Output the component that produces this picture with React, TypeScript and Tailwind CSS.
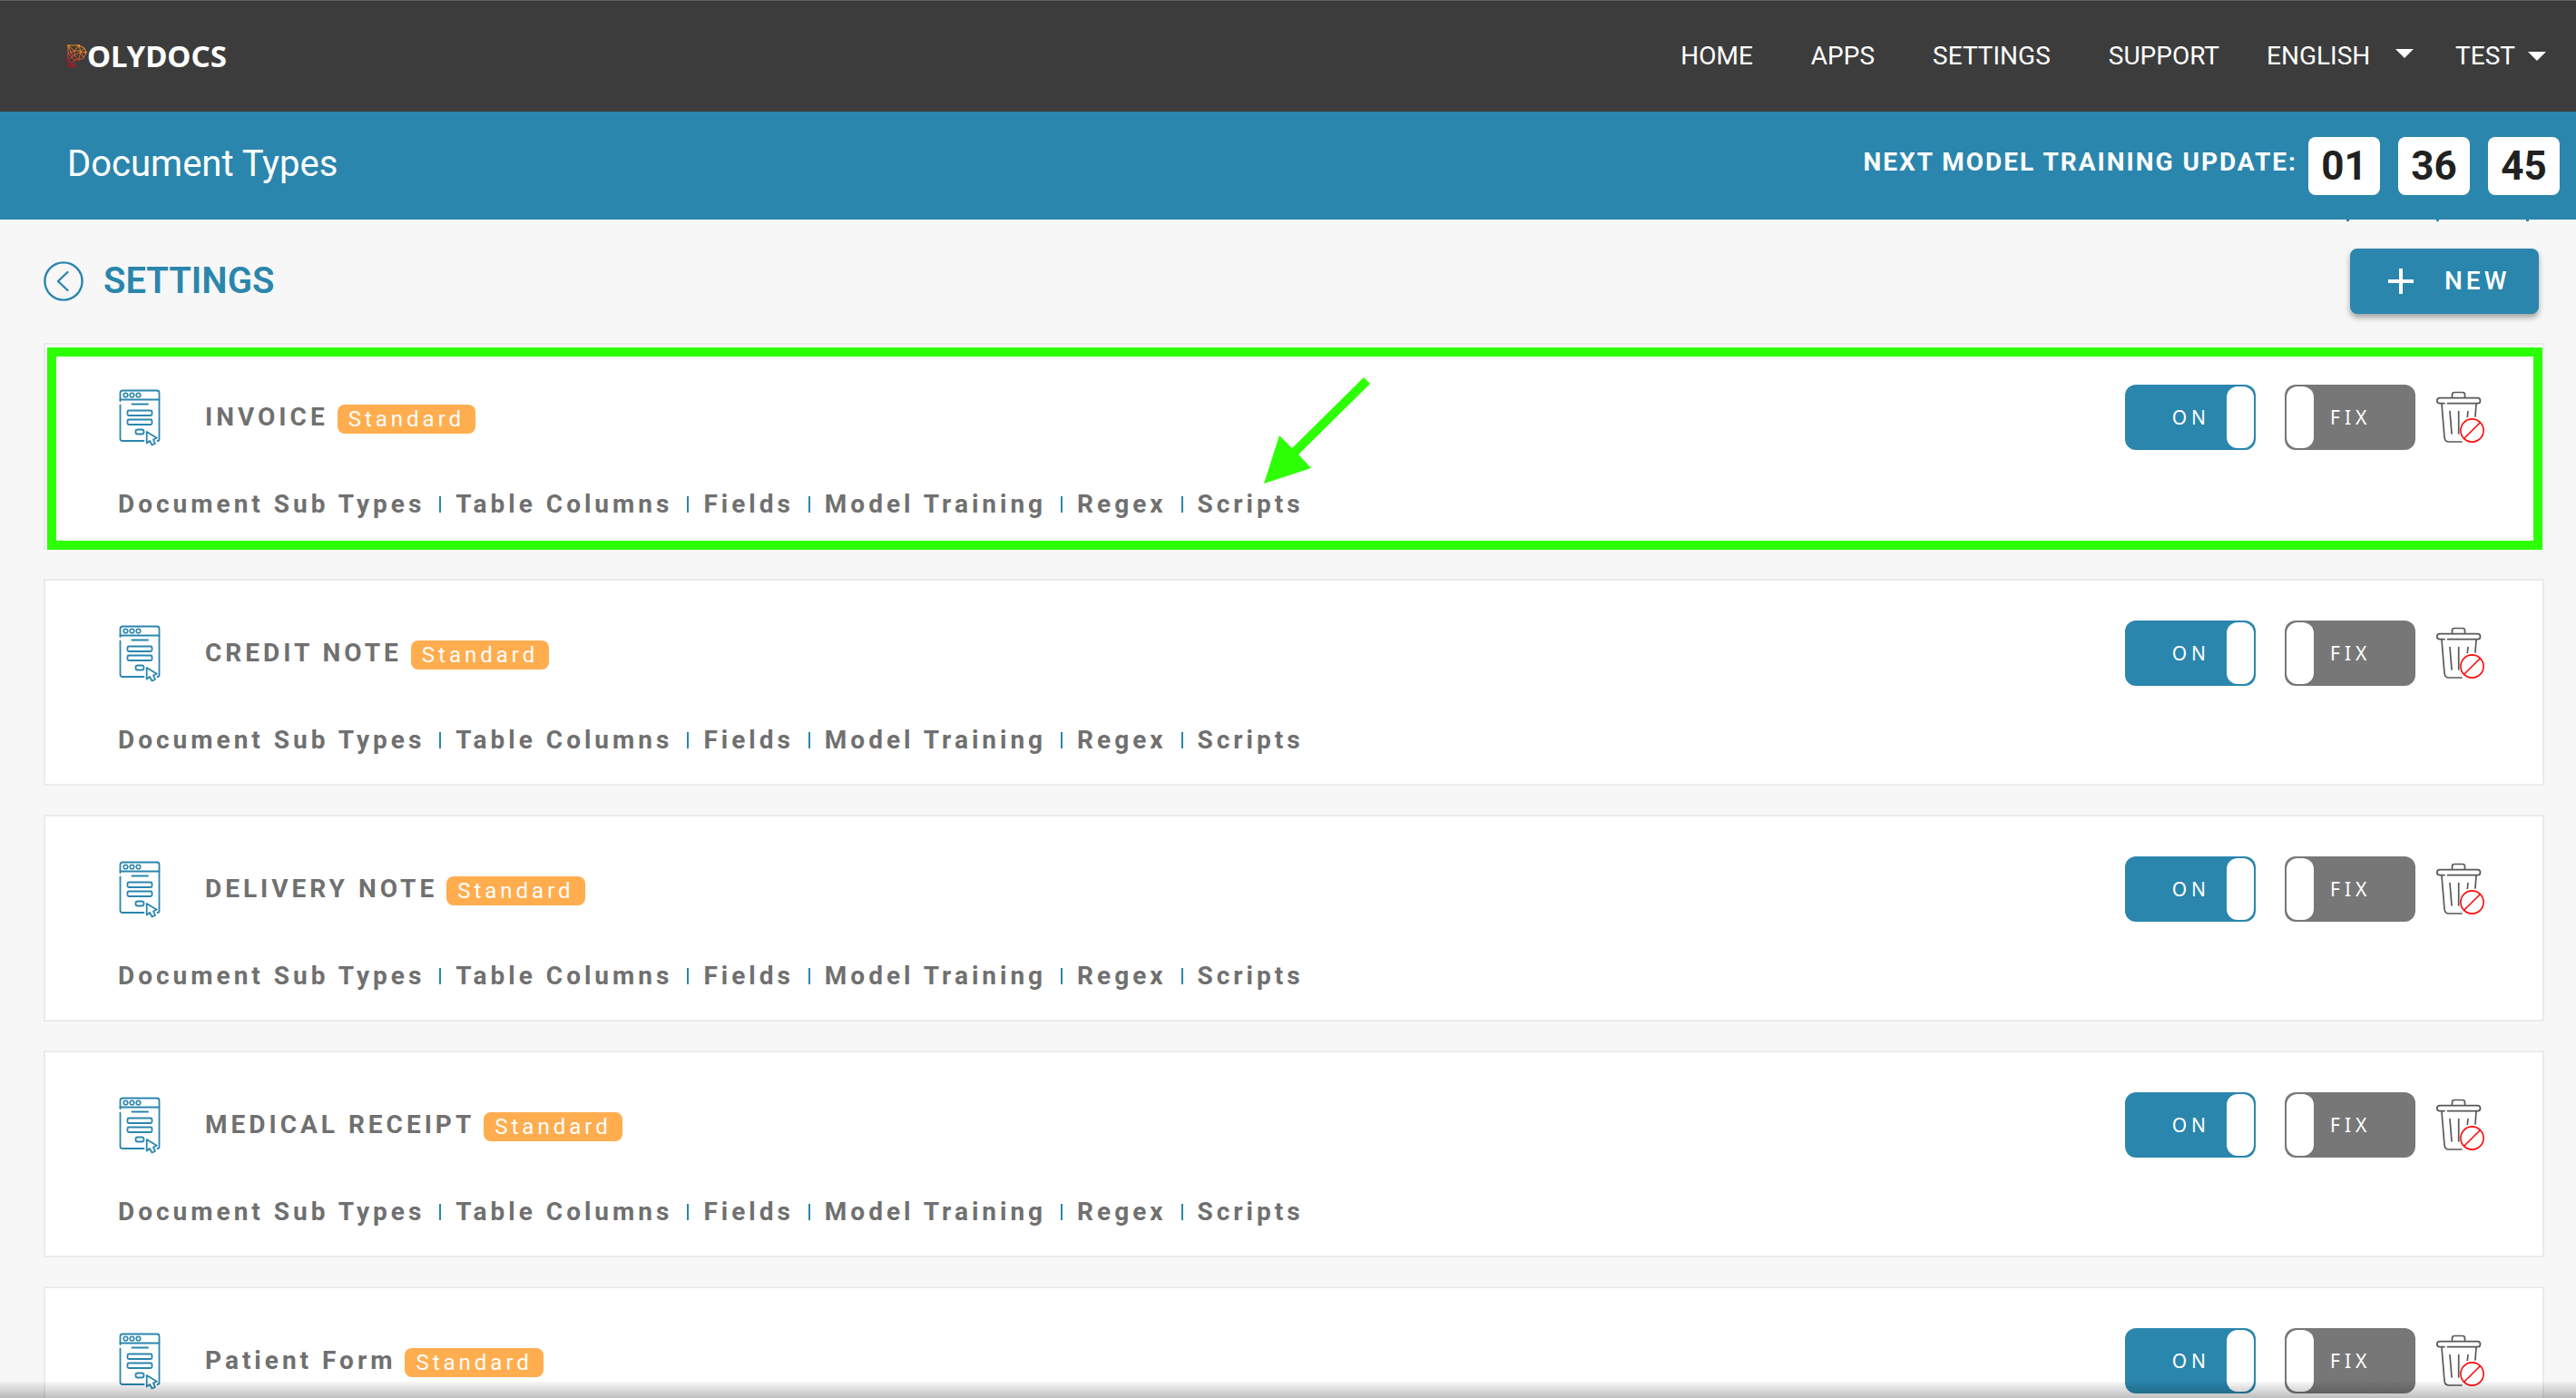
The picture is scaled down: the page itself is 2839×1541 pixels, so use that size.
import React from "react";

type DocType = { name: string; highlighted?: boolean };

const docTypes: DocType[] = [
  { name: "INVOICE", highlighted: true },
  { name: "CREDIT NOTE" },
  { name: "DELIVERY NOTE" },
  { name: "MEDICAL RECEIPT" },
  { name: "Patient Form" },
];

const sections = ["Document Sub Types", "Table Columns", "Fields", "Model Training", "Regex", "Scripts"];
const navLinks = ["HOME", "APPS", "SETTINGS", "SUPPORT"];
const countdown = ["01", "36", "45"];

function Caret({ className }: { className?: string }) {
  return (
    <svg className={className} width="20" height="10" viewBox="0 0 20 10" fill="currentColor" aria-hidden="true">
      <path d="M0 0H20L10 10Z" />
    </svg>
  );
}

function LogoMark() {
  return (
    <svg width="22" height="26" viewBox="0 0 22 26" fill="none" aria-hidden="true">
      <defs>
        <linearGradient id="mark" x1="16" y1="0" x2="4" y2="26" gradientUnits="userSpaceOnUse">
          <stop offset="0" stopColor="#f5a623" />
          <stop offset="0.5" stopColor="#d9532a" />
          <stop offset="1" stopColor="#b8001c" />
        </linearGradient>
      </defs>
      <g stroke="url(#mark)" strokeWidth="1">
        <path d="M1 1H13L19 4L21 9L18 15L13 17H8V24H1Z" />
        <path d="M1 1L8 7L13 1L15 8L21 9M8 7H15L13 17L8 12V7M1 10L8 7M1 10L8 17L1 24M1 17L8 12M1 17L8 24M15 8L19 4M15 8L18 15M1 1L6 13M8 12L15 8" />
      </g>
      <g fill="#e8892b">
        <circle cx="1.5" cy="1.5" r="1.2" />
        <circle cx="13" cy="1.5" r="1.4" />
        <circle cx="20.5" cy="8.5" r="1.2" />
      </g>
      <g fill="#c00d1e">
        <circle cx="1.5" cy="17" r="1.2" />
        <circle cx="8" cy="24" r="1.5" />
      </g>
    </svg>
  );
}

function FormIcon() {
  return (
    <svg
      width="48"
      height="64"
      viewBox="0 0 48 64"
      fill="none"
      stroke="#2a86ad"
      strokeWidth="1.8"
      strokeLinecap="round"
      strokeLinejoin="round"
      aria-hidden="true"
    >
      <path d="M2.5 14V5Q2.5 2.5 5 2.5H43Q45.5 2.5 45.5 5V56Q45.5 58 43.5 58" />
      <path d="M2.5 18.5V55.5Q2.5 58 5 58H28.5" />
      <path d="M2.5 12.5H45.5" />
      <circle cx="8.5" cy="7.5" r="2.3" strokeWidth="1.6" />
      <circle cx="15.5" cy="7.5" r="2.3" strokeWidth="1.6" />
      <circle cx="22.5" cy="7.5" r="2.3" strokeWidth="1.6" />
      <path d="M15.5 17.5H33" />
      <rect x="10.5" y="24.5" width="27" height="5.5" rx="1.5" />
      <rect x="10.5" y="34.5" width="27" height="5.5" rx="1.5" />
      <rect x="19.5" y="45.500" width="9" height="5" rx="2.3" />
      <path d="M31.7 48V60.5L35 58L37.5 62.5L41 61L39 56.5L42.8 54.8Z" />
    </svg>
  );
}

function BlockedTrashIcon() {
  return (
    <svg width="56" height="60" viewBox="0 0 56 60" fill="none" strokeLinecap="round" strokeLinejoin="round" aria-hidden="true">
      <g stroke="#58585a" strokeWidth="1.7">
        <path d="M18.5 8V5Q18.5 2.5 21 2.5H30Q32.5 2.5 32.5 5V8" />
        <path d="M10 14.7H5Q1.8 14.7 1.8 11.7Q1.8 8.7 5 8.7H46.5Q49.5 8.7 49.5 11.7Q49.5 14.7 46.5 14.7H13.5" />
        <path d="M7 15.5L10 52Q10.5 57 15 57H29" />
        <path d="M45 15.5L44 29" />
        <path d="M16 23.5L18 48M25.7 23.5V48M36 23.5L35.3 29.5" />
      </g>
      <g stroke="#ff0a0a" strokeWidth="1.6">
        <circle cx="40.5" cy="44.5" r="12.6" />
        <path d="M31.7 53.3L49.3 35.7" />
      </g>
    </svg>
  );
}

function Toggle({ label, name, on }: { label: string; name: string; on?: boolean }) {
  return (
    <label
      className={
        "relative flex h-[72px] w-36 cursor-pointer items-center rounded-xl p-0.5 " +
        (on ? "flex-row-reverse bg-[#2a86ad]" : "bg-[#777777]")
      }
    >
      <input type="checkbox" role="switch" defaultChecked={on} aria-label={name} className="absolute inset-0 size-full cursor-pointer opacity-0" />
      <span className="h-[68px] w-[30px] shrink-0 rounded-xl bg-white" />
      <span
        className={
          "font-['Noto_Sans',sans-serif] text-[21px] leading-8 tracking-[5px] text-white " + (on ? "mr-[18px]" : "ml-[18px]")
        }
      >
        {label}
      </span>
    </label>
  );
}

function DocTypeCard({ doc }: { doc: DocType }) {
  return (
    <li className="relative border-2 border-[#ebebeb] bg-white pt-11 pr-[62px] pb-8 pl-20">
      <div className="flex h-[72px] items-center">
        <FormIcon />
        <div className="ml-12 flex items-center gap-2.5">
          <h2 className="text-[28px] leading-8 font-bold tracking-[4px] text-[#707070]">{doc.name}</h2>
          <span className="mt-1 rounded-lg bg-[#ffad4f] px-3 text-2xl leading-8 tracking-[4px] text-white">Standard</span>
        </div>
        <div className="ml-auto flex items-center">
          <Toggle label="ON" name={doc.name + " enabled"} on />
          <div className="ml-8">
            <Toggle label="FIX" name={doc.name + " fixed"} />
          </div>
          <button type="button" disabled aria-label={"Delete " + doc.name} className="ml-[22px]">
            <BlockedTrashIcon />
          </button>
        </div>
      </div>
      <nav aria-label={doc.name + " sections"} className="mt-11 flex items-center gap-4">
        {sections.map((s, i) => (
          <React.Fragment key={s}>
            {i > 0 && <span className="h-[18px] w-0.5 bg-[#2a86ad]" />}
            <a href="#" className="text-[28px] leading-8 font-bold tracking-[4px] text-[#707070]">
              {s}
            </a>
          </React.Fragment>
        ))}
      </nav>
      {doc.highlighted && (
        <>
          <div className="pointer-events-none absolute top-[3px] right-0 -bottom-0.5 left-0.5 border-10 border-[#2dff05]" />
          <svg
            className="pointer-events-none absolute top-9 left-[1343px]"
            width="118"
            height="118"
            viewBox="0 0 118 118"
            fill="#2dff05"
            aria-hidden="true"
          >
            <path d="M0 117L17 64L31 78L110 0L117 7L38 85L52 100Z" />
          </svg>
        </>
      )}
    </li>
  );
}

export default function App() {
  return (
    <div className="relative h-screen overflow-hidden bg-[#f7f7f7] font-[Roboto,sans-serif]">
      <header className="flex h-[123px] items-center border-t border-[#5f6065] bg-[#3c3c3c] pr-[33px] pl-[74px] text-white">
        <a href="#" aria-label="Polydocs" className="flex items-center">
          <LogoMark />
          <span className="font-['Noto_Sans',sans-serif] text-[33px] leading-10 font-bold">OLYDOCS</span>
        </a>
        <nav className="ml-auto flex items-center text-[28px] leading-8">
          <div className="flex gap-16">
            {navLinks.map((l) => (
              <a key={l} href="#">
                {l}
              </a>
            ))}
          </div>
          <div className="relative ml-[52px]">
            <select aria-label="Language" className="w-[162px] cursor-pointer appearance-none bg-transparent">
              <option>ENGLISH</option>
            </select>
            <Caret className="pointer-events-none absolute top-2 right-0" />
          </div>
          <button type="button" aria-haspopup="menu" className="ml-[46px] flex items-center gap-3.5">
            TEST
            <Caret />
          </button>
        </nav>
      </header>

      <div className="flex h-[119px] items-center justify-between bg-[#2a86ad] pr-[18px] pl-[74px] text-white">
        <h1 className="pb-1 text-[40px] leading-[48px]">Document Types</h1>
        <div className="flex items-center">
          <span className="mr-3 pb-2 text-[28px] leading-8 font-bold tracking-[2px]">NEXT MODEL TRAINING UPDATE:</span>
          <div className="flex gap-5">
            {countdown.map((n) => (
              <span
                key={n}
                className="relative flex h-16 w-[79px] items-center justify-center rounded-lg bg-white text-[44px] font-bold text-[#212121]"
              >
                {n}
                <span className="absolute -bottom-[29px] left-[42px] h-0.5 w-[3px] bg-[#2a86ad]" />
              </span>
            ))}
          </div>
        </div>
      </div>

      <main className="pr-[35px] pl-12">
        <div className="flex h-[136px] items-center justify-between pr-1.5">
          <a href="#" className="flex items-center gap-[22px] text-[#2a86ad]">
            <svg width="44" height="44" viewBox="0 0 44 44" fill="none" stroke="currentColor" strokeWidth="2.4" strokeLinecap="round" strokeLinejoin="round" aria-hidden="true">
              <circle cx="22" cy="22" r="20.6" />
              <path d="M26.5 12L16 22L26.5 32" />
            </svg>
            <span className="text-[40px] leading-[48px] font-semibold">SETTINGS</span>
          </a>
          <button
            type="button"
            className="flex h-[72px] w-52 items-center rounded-lg bg-[#2a86ad] pl-[42px] text-[28px] font-medium tracking-[4px] text-white shadow-[0_4px_6px_rgba(0,0,0,0.35)]"
          >
            <svg width="28" height="28" viewBox="0 0 28 28" stroke="currentColor" strokeWidth="4" className="mr-[34px]" aria-hidden="true">
              <path d="M14 0V28M0 14H28" />
            </svg>
            NEW
          </button>
        </div>
        <ul className="flex flex-col gap-8">
          {docTypes.map((d) => (
            <DocTypeCard key={d.name} doc={d} />
          ))}
        </ul>
      </main>

      <div className="pointer-events-none absolute inset-x-0 bottom-0 h-[18px] bg-linear-to-b from-black/3 to-black/25" />
    </div>
  );
}
